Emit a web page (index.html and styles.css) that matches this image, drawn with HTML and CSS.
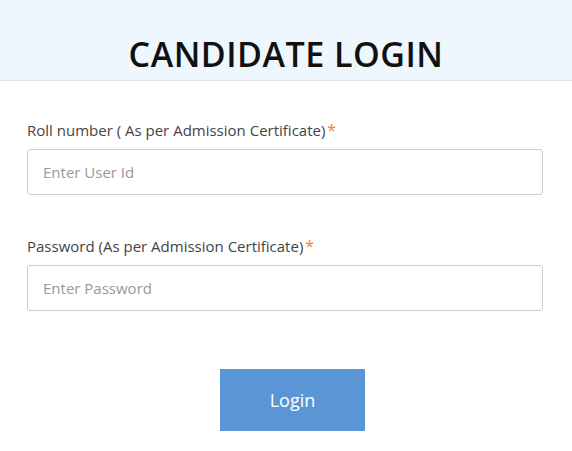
FILE: index.html
```html
<!DOCTYPE html>
<html>
<head>
<meta charset="utf-8">
<link rel="stylesheet" href="styles.css">
</head>
<body>
<div class="header"><h1 class="title">CANDIDATE LOGIN</h1></div>
<form class="form">
  <div class="field">
    <label class="label">Roll number ( As per Admission Certificate)<span class="req">*</span></label>
    <input class="input" type="text" placeholder="Enter User Id">
  </div>
  <div class="field">
    <label class="label">Password (As per Admission Certificate)<span class="req">*</span></label>
    <input class="input" type="password" placeholder="Enter Password">
  </div>
  <div class="actions"><button class="btn" type="button">Login</button></div>
</form>
</body>
</html>
```
FILE: styles.css
```css
* { box-sizing: border-box; }
body { margin: 0; font-family: "Open Sans", "Noto Sans", sans-serif; background: #fff; color: #333; }
.header { height: 81px; background: #eef6fe; border-bottom: 1px solid #e0e4e8; display: flex; align-items: flex-end; justify-content: center; }
.title { margin: 0 0 2px; font-size: 34px; font-weight: 600; color: #111; letter-spacing: 0.5px; line-height: 48px; }
.form { padding: 39px 29px 0 27px; }
.field { display: flex; flex-direction: column; margin-bottom: 41px; }
.label { font-size: 15px; line-height: 20px; color: #444; margin-bottom: 9px; }
.req { color: #f5822a; font-size: 16px; margin-left: 2px; }
.input { width: 516px; height: 46px; border: 1px solid #ccc; border-radius: 3px; padding: 0 15px; font-family: inherit; font-size: 15px; color: #333; }
.input::placeholder { color: #999; }
.actions { display: flex; justify-content: center; margin-top: 58px; }
.btn { width: 145px; height: 62px; background: #5a96d6; border: none; color: #fff; font-family: inherit; font-size: 18px; margin-left: 15px; }
```
